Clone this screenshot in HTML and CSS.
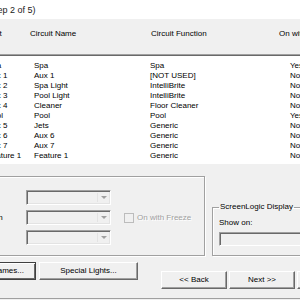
FILE: index.html
```html
<!DOCTYPE html>
<html>
<head>
<meta charset="utf-8">
<title>Circuit Setup (Step 2 of 5)</title>
<link rel="stylesheet" href="styles.css">
</head>
<body>
    <div class="window">
        <div class="titleBar">
            <span class="title">Circuit Setup (Step 2 of 5)</span>
        </div>

        <div class="columnHeads">
            <span>Circuit</span>
            <span>Circuit Name</span>
            <span>Circuit Function</span>
            <span>On with Freeze</span>
        </div>

        <div class="listBox">
            <div class="row"><span>Spa</span><span>Spa</span><span>Spa</span><span>Yes</span></div>
            <div class="row"><span>Aux 1</span><span>Aux 1</span><span>[NOT USED]</span><span>No</span></div>
            <div class="row"><span>Aux 2</span><span>Spa Light</span><span>IntelliBrite</span><span>No</span></div>
            <div class="row"><span>Aux 3</span><span>Pool Light</span><span>IntelliBrite</span><span>No</span></div>
            <div class="row"><span>Aux 4</span><span>Cleaner</span><span>Floor Cleaner</span><span>No</span></div>
            <div class="row"><span>Pool</span><span>Pool</span><span>Pool</span><span>Yes</span></div>
            <div class="row"><span>Aux 5</span><span>Jets</span><span>Generic</span><span>No</span></div>
            <div class="row"><span>Aux 6</span><span>Aux 6</span><span>Generic</span><span>No</span></div>
            <div class="row"><span>Aux 7</span><span>Aux 7</span><span>Generic</span><span>No</span></div>
            <div class="row"><span>Feature 1</span><span>Feature 1</span><span>Generic</span><span>No</span></div>
            <div class="row"><span>Feature 2</span><span>Feature 2</span><span>Generic</span><span>No</span></div>
        </div>

        <div class="lowerPart">
            <div class="groupBox circuitGroup">
                <div class="fieldGrid">
                    <span class="fieldLabel">Type</span>
                    <div class="combo"><div class="comboButton"><span class="arrow"></span></div></div>
                    <span></span>

                    <span class="fieldLabel">Function</span>
                    <div class="combo"><div class="comboButton"><span class="arrow"></span></div></div>
                    <label class="checkLine"><span class="checkBox"></span>On with Freeze</label>

                    <span class="fieldLabel">Valve</span>
                    <div class="combo"><div class="comboButton"><span class="arrow"></span></div></div>
                    <span></span>
                </div>
            </div>

            <fieldset class="groupBox displayGroup">
                <legend>ScreenLogic Display</legend>
                <div class="showOn">Show on:</div>
                <div class="textField"></div>
            </fieldset>
        </div>

        <div class="buttonRow">
            <div class="leftButtons">
                <div class="button defaultButton namesButton">Circuit Names...</div>
                <div class="button lightsButton">Special Lights...</div>
            </div>
            <div class="wizardButtons">
                <div class="button wizButton">&lt;&lt; Back</div>
                <div class="button wizButton">Next &gt;&gt;</div>
                <div class="button wizButton">Cancel</div>
            </div>
        </div>

        <div class="bottomEdge"></div>
    </div>
</body>
</html>
```

FILE: styles.css
```css
* {
    box-sizing: border-box;
    margin: 0px;
    padding: 0px;
}
html, body {
    overflow: hidden;
}
body {
    background-color: #f0f0f0;
    font-family: "Liberation Sans", Arial, sans-serif;
    font-size: 8px;
    color: black;
}
.window {
    width: 420px;
    margin-left: -80px;
}
.titleBar {
    height: 19px;
    background-color: white;
    padding-left: 12px;
    padding-top: 1px;
    line-height: 19px;
}
.title {
    font-size: 9px;
    color: #1a1a1a;
}
.columnHeads {
    display: grid;
    grid-template-columns: 51px 121px 128px auto;
    margin-top: 10px;
    margin-left: 59px;
    height: 10px;
    line-height: 10px;
    white-space: nowrap;
}
.listBox {
    margin-top: 15px;
    margin-left: 56px;
    height: 110px;
    overflow: hidden;
    background-color: white;
    border: 1px solid;
    border-color: #a0a0a0 white white #a0a0a0;
    box-shadow: inset 1px 1px 0px #696969;
    padding-top: 6px;
    padding-left: 10px;
}
.row {
    display: grid;
    grid-template-columns: 47px 116px 140px auto;
    height: 10px;
    line-height: 10px;
    white-space: nowrap;
}
.lowerPart {
    display: flex;
    align-items: flex-end;
    margin-top: 12px;
}
.groupBox {
    border: 1px solid #a0a0a0;
    box-shadow: inset 1px 1px 0px white, 1px 1px 0px white;
}
.circuitGroup {
    margin-left: 20px;
    width: 265px;
    height: 80px;
    padding-top: 13px;
    padding-left: 31px;
}
.fieldGrid {
    display: grid;
    grid-template-columns: 54px 85px auto;
    grid-auto-rows: 15px;
    row-gap: 5px;
    column-gap: 0px;
    align-items: center;
}
.fieldLabel {
    white-space: nowrap;
}
.combo {
    position: relative;
    width: 85px;
    height: 15px;
    background-color: #f0f0f0;
    border: 1px solid;
    border-color: #a0a0a0 white white #a0a0a0;
    box-shadow: inset 1px 1px 0px #696969, inset -1px -1px 0px #e3e3e3;
    display: flex;
    justify-content: flex-end;
    padding: 2px 1px 2px 2px;
}
.comboButton {
    width: 12px;
    height: 100%;
    border-left: 1px solid #e3e3e3;
    display: flex;
    align-items: center;
    justify-content: center;
}
.arrow {
    width: 0px;
    height: 0px;
    border-left: 3px solid transparent;
    border-right: 3px solid transparent;
    border-top: 3px solid #a0a0a0;
}
.checkLine {
    display: flex;
    align-items: center;
    margin-left: 13px;
    color: #a0a0a0;
    text-shadow: 1px 1px 0px white;
    white-space: nowrap;
}
.checkBox {
    width: 10px;
    height: 10px;
    border: 1px solid #bcbcbc;
    background-color: #f0f0f0;
    margin-right: 3px;
}
.displayGroup {
    margin-left: 7px;
    width: 128px;
    padding: 0px 6px 9px 6px;
    min-inline-size: 0px;
}
.displayGroup legend {
    padding: 0px 1px;
    line-height: 10px;
    margin-left: 0px;
}
.showOn {
    margin-top: 6px;
    height: 10px;
    line-height: 10px;
}
.textField {
    margin-top: 4px;
    height: 14px;
    width: 140px;
    background-color: #f0f0f0;
    border: 1px solid;
    border-color: #a0a0a0 white white #a0a0a0;
    box-shadow: inset 1px 1px 0px #696969;
}
.buttonRow {
    display: flex;
    align-items: flex-start;
    margin-top: 6px;
    margin-left: 35px;
}
.leftButtons, .wizardButtons {
    display: flex;
}
.button {
    height: 18px;
    line-height: 16px;
    text-align: center;
    white-space: nowrap;
    background-color: #f0f0f0;
    border: 1px solid;
    border-color: white #696969 #696969 white;
    box-shadow: inset -1px -1px 0px #a0a0a0;
}
.defaultButton {
    border-color: #404040;
    box-shadow: inset 1px 1px 0px white, inset -1px -1px 0px #696969;
}
.namesButton {
    width: 81px;
}
.lightsButton {
    width: 99px;
    margin-left: 3px;
}
.wizardButtons {
    margin-left: 23px;
    margin-top: 9px;
    gap: 2px;
}
.wizButton {
    width: 66px;
}
.bottomEdge {
    margin-top: 9px;
    border-top: 1px solid #a0a0a0;
    height: 10px;
}
```
